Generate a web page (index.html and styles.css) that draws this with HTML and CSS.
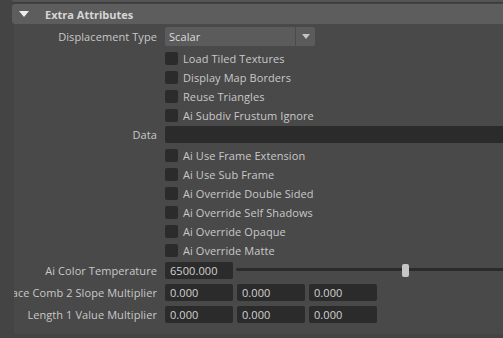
FILE: index.html
```html
<!DOCTYPE html>
<html lang="en">
<head>
    <meta charset="UTF-8">
    <title>Extra Attributes</title>
    <link rel="stylesheet" href="styles.css">
</head>
<body>
    <div class="panel">
        <div class="top-strip"></div>
        <div class="section-header">
            <span class="caret"></span>
            <span class="section-title">Extra Attributes</span>
        </div>
        <div class="section-body">
            <div class="row row-tall">
                <div class="label">Displacement Type</div>
                <div class="dropdown">
                    <span class="dropdown-value">Scalar</span>
                    <span class="dropdown-arrow"></span>
                </div>
            </div>

            <div class="checks first-checks">
                <label class="check-row"><span class="box"></span>Load Tiled Textures</label>
                <label class="check-row"><span class="box"></span>Display Map Borders</label>
                <label class="check-row"><span class="box"></span>Reuse Triangles</label>
                <label class="check-row"><span class="box"></span>Ai Subdiv Frustum Ignore</label>
            </div>

            <div class="row row-data">
                <div class="label">Data</div>
                <div class="field field-wide"></div>
            </div>

            <div class="checks second-checks">
                <label class="check-row"><span class="box"></span>Ai Use Frame Extension</label>
                <label class="check-row"><span class="box"></span>Ai Use Sub Frame</label>
                <label class="check-row"><span class="box"></span>Ai Override Double Sided</label>
                <label class="check-row"><span class="box"></span>Ai Override Self Shadows</label>
                <label class="check-row"><span class="box"></span>Ai Override Opaque</label>
                <label class="check-row"><span class="box"></span>Ai Override Matte</label>
            </div>

            <div class="row row-field first-field">
                <div class="label">Ai Color Temperature</div>
                <div class="field">6500.000</div>
                <div class="slider">
                    <div class="track"></div>
                    <div class="thumb"></div>
                </div>
            </div>

            <div class="row row-field">
                <div class="label">Surface Comb 2 Slope Multiplier</div>
                <div class="field">0.000</div>
                <div class="field">0.000</div>
                <div class="field">0.000</div>
            </div>

            <div class="row row-field">
                <div class="label">Length 1 Value Multiplier</div>
                <div class="field">0.000</div>
                <div class="field">0.000</div>
                <div class="field">0.000</div>
            </div>
        </div>
    </div>
</body>
</html>
```

FILE: styles.css
```css
body {
    margin: 0;
    background: #444444;
    color: #c8c8c8;
    font-family: "Open Sans", "Noto Sans", sans-serif;
    font-size: 11px;
    letter-spacing: 0.08px;
    overflow: hidden;
    width: 503px;
    height: 338px;
}

.panel {
    margin-left: 12px;
    width: 540px;
}

.top-strip {
    height: 2px;
    background: #555555;
    border-bottom: 1px solid #3a3a3a;
    border-bottom-left-radius: 2px;
}

.section-header {
    height: 20px;
    margin-top: 1px;
    background: #5d5d5d;
    border-radius: 3px;
    display: flex;
    align-items: center;
}

.caret {
    width: 0;
    height: 0;
    margin-left: 7px;
    border-left: 5.5px solid transparent;
    border-right: 5.5px solid transparent;
    border-top: 6px solid #eeeeee;
}

.section-title {
    margin-left: 16px;
    font-weight: bold;
    color: #d6d6d6;
    letter-spacing: 0;
}

.section-body {
    margin-left: 2px;
    background: #494949;
    padding-top: 3px;
    padding-bottom: 11px;
    display: flex;
    flex-direction: column;
}

.row {
    display: flex;
    align-items: center;
    gap: 4px;
}

/* long labels get clipped on the left, like the editor does */
.label {
    width: 143px;
    flex-shrink: 0;
    margin-right: 4px;
    text-align: right;
    white-space: nowrap;
    overflow: hidden;
    direction: rtl;
}

.row-tall {
    height: 19px;
}

.dropdown {
    width: 150px;
    height: 19px;
    background: #5b5b5b;
    border-radius: 2px;
    display: flex;
    align-items: center;
}

.dropdown-value {
    flex: 1;
    padding-left: 4px;
    color: #dcdcdc;
}

.dropdown-arrow {
    width: 20px;
    height: 19px;
    border-left: 1px solid #4a4a4a;
    box-sizing: border-box;
    display: flex;
    align-items: center;
    justify-content: center;
}

.dropdown-arrow::after {
    content: "";
    border-left: 4.5px solid transparent;
    border-right: 4.5px solid transparent;
    border-top: 5px solid #c4c4c4;
}

.checks {
    display: flex;
    flex-direction: column;
    padding-left: 151px;
}

.first-checks {
    margin-top: 3px;
}

.second-checks {
    margin-top: 3px;
}

.check-row {
    height: 19px;
    display: flex;
    align-items: center;
    gap: 5px;
}

.box {
    width: 13px;
    height: 13px;
    background: #2b2b2b;
    border-radius: 2px;
}

.row-data {
    height: 17px;
    margin-top: 1px;
}

.field {
    width: 68px;
    height: 17px;
    background: #2b2b2b;
    border-radius: 2px;
    padding-left: 5px;
    box-sizing: border-box;
    line-height: 17px;
    color: #d2d2d2;
    flex-shrink: 0;
}

.field-wide {
    width: 380px;
}

.row-field {
    height: 17px;
    margin-top: 5px;
}

.first-field {
    margin-top: 2px;
}

.slider {
    position: relative;
    flex: 1;
    height: 17px;
    margin-left: -1px;
}

.track {
    position: absolute;
    left: 0;
    right: 0;
    top: 6px;
    height: 3px;
    background: #2b2b2b;
    border-radius: 2px;
}

.thumb {
    position: absolute;
    left: 166px;
    top: 2px;
    width: 7px;
    height: 13px;
    background: #c6c6c6;
    border-radius: 2px;
}
```
